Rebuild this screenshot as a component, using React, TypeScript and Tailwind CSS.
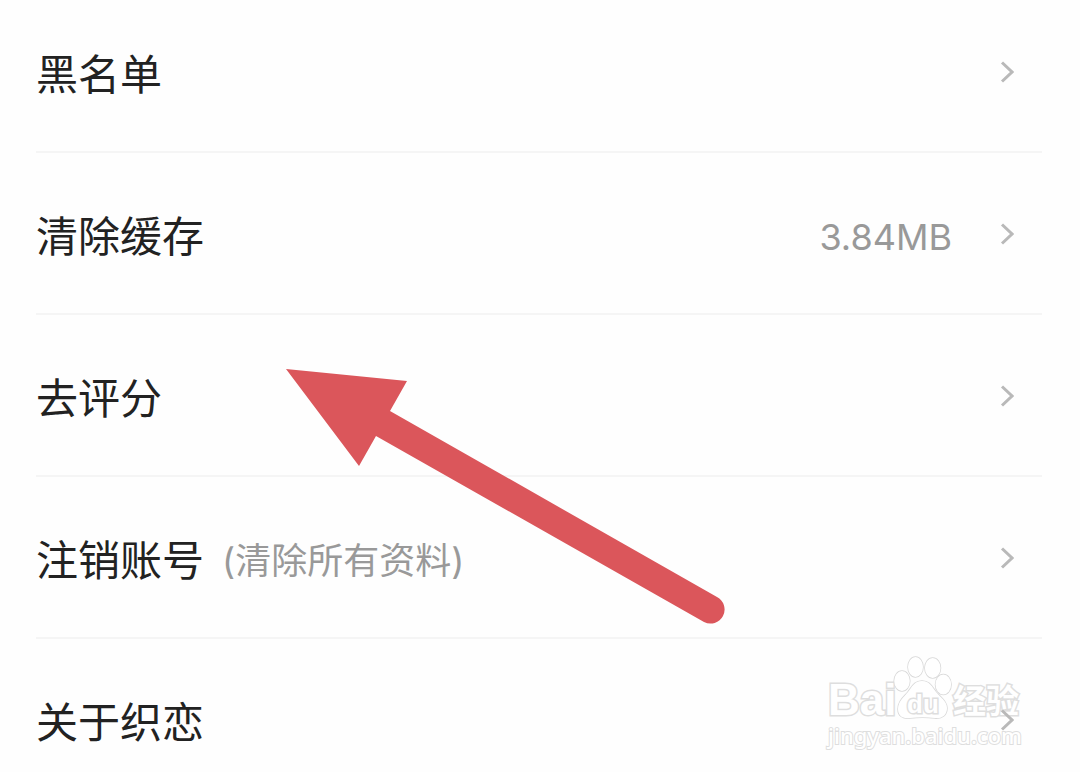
type Item = { label: string; note?: string; value?: string };

const items: Item[] = [
  { label: "黑名单" },
  { label: "清除缓存", value: "3.84MB" },
  { label: "去评分" },
  { label: "注销账号", note: "(清除所有资料)" },
  { label: "关于织恋" },
];

function Chevron() {
  return (
    <svg className="mb-1.5 h-6 w-4 shrink-0" viewBox="0 0 16 24" fill="none" stroke="#b9b9b9" strokeWidth="3" aria-hidden="true">
      <path d="M4 2.500 L14 12 L4 21.500" />
    </svg>
  );
}

function Row({ label, note, value }: Item) {
  return (
    <li className="border-b-2 border-[#f5f5f5] pt-[54px] pb-[46px] first:pt-[45px] last:border-b-0 last:pb-4">
      <button type="button" className="flex h-[60px] w-full items-center pr-7 text-left">
        <span className="text-[42px] leading-[60px] text-[#222222]">{label}</span>
        {note && <span className="ml-[18px] text-[36px] leading-[60px] text-[#999999]">{note}</span>}
        <span className="mr-[46px] ml-auto text-[36px] leading-[60px] text-[#999999]">{value}</span>
        <Chevron />
      </button>
    </li>
  );
}

function Arrow() {
  return (
    <svg className="pointer-events-none absolute top-[368px] left-[285px] h-[257px] w-[440px]" viewBox="285 368 440 257" aria-hidden="true">
      <path d="M286 369 L407 381 L390 411 L717 597 A14 14 0 0 1 704 622 L376 436 L359 466 Z" fill="#db565b" />
    </svg>
  );
}

function Watermark() {
  return (
    <div className="pointer-events-none absolute top-[656px] left-[828px] w-[194px] text-white [-webkit-text-stroke:3px_#dedede] [paint-order:stroke_fill]">
      <div className="flex h-[64px] items-end">
        <span className="w-[65px] font-['Liberation_Sans',sans-serif] text-[44px] leading-[40px] font-bold">Bai</span>
        <div className="relative h-[64px] w-[60px] shrink-0">
          <svg className="h-[64px] w-[60px]" viewBox="0 0 60 64" fill="#ffffff" stroke="#d8d8d8" strokeWidth="1.5" aria-hidden="true">
            <ellipse cx="9" cy="25" rx="7.800" ry="10" />
            <ellipse cx="22.500" cy="11" rx="7.500" ry="10" />
            <ellipse cx="39.700" cy="12" rx="7.800" ry="10" />
            <ellipse cx="50.300" cy="28.500" rx="7.800" ry="10" />
            <path d="M29 25 C21 25 19 31 15 36 C11 41 5 45 5 53 C5 60 10 63 17 62 C25 61 34 61 42 62 C49 63 54 59 54 52 C54 45 47 41 43 36 C39 31 37 25 29 25 Z" />
          </svg>
          <span className="absolute inset-x-0 top-[35px] text-center font-['Liberation_Sans',sans-serif] text-[26px] leading-[26px] font-bold">du</span>
        </div>
        <span className="text-[33px] leading-[38px] font-bold whitespace-nowrap">经验</span>
      </div>
      <div className="font-['Noto_Sans',sans-serif] text-[22px] leading-[30px] font-medium whitespace-nowrap [-webkit-text-stroke:2px_#dedede]">jingyan.baidu.com</div>
    </div>
  );
}

export default function App() {
  return (
    <main className="relative min-h-screen overflow-hidden bg-[#fefefe] font-['Inter','Noto_Sans_CJK_SC',sans-serif]">
      <Watermark />
      <ul className="relative pr-[38px] pl-9">
        {items.map((item) => (
          <Row key={item.label} {...item} />
        ))}
      </ul>
      <Arrow />
    </main>
  );
}
